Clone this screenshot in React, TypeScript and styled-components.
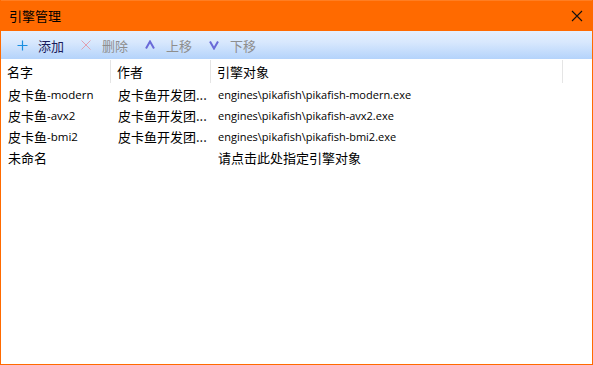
import { createGlobalStyle, styled } from 'styled-components';

const GlobalStyle = createGlobalStyle`
    html, body {
        margin: 0;
        padding: 0;
        background: #ffffff;
    }
    body {
        font-family: 'Noto Sans CJK SC', 'Noto Sans', sans-serif;
    }
`;

const engines = [
    { name: '皮卡鱼', suffix: '-modern', author: '皮卡鱼开发团...', path: 'engines\\pikafish\\pikafish-modern.exe' },
    { name: '皮卡鱼', suffix: '-avx2', author: '皮卡鱼开发团...', path: 'engines\\pikafish\\pikafish-avx2.exe' },
    { name: '皮卡鱼', suffix: '-bmi2', author: '皮卡鱼开发团...', path: 'engines\\pikafish\\pikafish-bmi2.exe' },
];

const App = () => {
    return (
        <>
            <GlobalStyle />
            <Window>
                <TitleBar>
                    <Title>引擎管理</Title>
                    <CloseButton>
                        <svg width="12" height="12" viewBox="0 0 12 12">
                            <path d="M1 1 L11 11 M11 1 L1 11" stroke="#111" strokeWidth="1.1" />
                        </svg>
                    </CloseButton>
                </TitleBar>
                <Toolbar>
                    <ToolButton>
                        <ToolIcon $color="#1a8fe0">
                            <svg width="11" height="11" viewBox="0 0 11 11">
                                <path d="M5.5 0.5 V10.5 M0.5 5.5 H10.5" stroke="currentColor" strokeWidth="1.2" />
                            </svg>
                        </ToolIcon>
                        <ToolLabel $enabled>添加</ToolLabel>
                    </ToolButton>
                    <ToolButton>
                        <ToolIcon $color="#e0a0b0">
                            <svg width="10" height="10" viewBox="0 0 10 10">
                                <path d="M0.5 0.5 L9.5 9.5 M9.5 0.5 L0.5 9.5" stroke="currentColor" strokeWidth="1" />
                            </svg>
                        </ToolIcon>
                        <ToolLabel>删除</ToolLabel>
                    </ToolButton>
                    <ToolButton>
                        <ToolIcon $color="#6a6ad8">
                            <svg width="10" height="10" viewBox="0 0 10 10">
                                <path d="M1 8.5 L5 1.5 L9 8.5" stroke="currentColor" strokeWidth="2" fill="none" />
                            </svg>
                        </ToolIcon>
                        <ToolLabel>上移</ToolLabel>
                    </ToolButton>
                    <ToolButton>
                        <ToolIcon $color="#6a6ad8">
                            <svg width="10" height="10" viewBox="0 0 10 10">
                                <path d="M1 1.5 L5 8.5 L9 1.5" stroke="currentColor" strokeWidth="2" fill="none" />
                            </svg>
                        </ToolIcon>
                        <ToolLabel>下移</ToolLabel>
                    </ToolButton>
                </Toolbar>
                <Table>
                    <HeaderRow>
                        <HeaderCell $width={110}>名字</HeaderCell>
                        <HeaderCell $width={100}>作者</HeaderCell>
                        <HeaderCell $width={352}>引擎对象</HeaderCell>
                    </HeaderRow>
                    {engines.map((e) => (
                        <Row key={e.suffix}>
                            <Cell $width={110}>
                                {e.name}
                                <Latin>{e.suffix}</Latin>
                            </Cell>
                            <Cell $width={100}>{e.author}</Cell>
                            <Cell $width={352}>
                                <Path>{e.path}</Path>
                            </Cell>
                        </Row>
                    ))}
                    <Row>
                        <Cell $width={110}>未命名</Cell>
                        <Cell $width={100} />
                        <Cell $width={352}>请点击此处指定引擎对象</Cell>
                    </Row>
                </Table>
            </Window>
        </>
    );
};

const Window = styled.div`
    width: 593px;
    height: 365px;
    box-sizing: border-box;
    border: 1px solid #ff6a00;
    border-top: none;
    display: flex;
    flex-direction: column;
    background: #ffffff;
    overflow: hidden;
`;

const TitleBar = styled.div`
    height: 31px;
    background: #ff6a00;
    border-top: 1px solid #ff7e22;
    box-sizing: border-box;
    margin: 0 -1px;
    display: flex;
    align-items: center;
    justify-content: space-between;
    padding: 0 10px 0 9px;
`;

const Title = styled.div`
    font-size: 13px;
    color: #000000;
    line-height: 1;
    margin-top: -2px;
`;

const CloseButton = styled.div`
    display: flex;
    align-items: center;
    justify-content: center;
    width: 12px;
    height: 12px;
`;

const Toolbar = styled.div`
    height: 28px;
    background: linear-gradient(to bottom, #e4effe 0%, #d8e8fd 40%, #b4d3fb 100%);
    display: flex;
    align-items: center;
    padding-left: 14px;
    gap: 15px;
`;

const ToolButton = styled.div`
    display: flex;
    align-items: center;
    gap: 9px;
`;

const ToolIcon = styled.span<{ $color: string }>`
    color: ${(p) => p.$color};
    width: 14px;
    display: flex;
    align-items: center;
    justify-content: center;
`;

const ToolLabel = styled.span<{ $enabled?: boolean }>`
    font-size: 13px;
    color: ${(p) => (p.$enabled ? '#1c1c5c' : '#8e8e8e')};
    line-height: 1;
`;

const Table = styled.div`
    display: flex;
    flex-direction: column;
`;

const HeaderRow = styled.div`
    display: flex;
    height: 25px;
`;

const HeaderCell = styled.div<{ $width: number }>`
    width: ${(p) => p.$width}px;
    box-sizing: border-box;
    border-right: 1px solid #e5e5e5;
    margin: 1px 0 1px;
    padding-left: 6px;
    font-size: 13px;
    color: #000000;
    display: flex;
    align-items: center;
`;

const Row = styled.div`
    display: flex;
    height: 21px;
`;

const Cell = styled.div<{ $width: number }>`
    width: ${(p) => p.$width}px;
    box-sizing: border-box;
    padding-left: 7px;
    font-size: 13px;
    color: #000000;
    display: flex;
    align-items: center;
    white-space: nowrap;
    overflow: hidden;
`;

const Latin = styled.span`
    font-family: 'Open Sans', 'Noto Sans', sans-serif;
    font-size: 11.5px;
`;

const Path = styled.span`
    font-family: 'Open Sans', 'Noto Sans', sans-serif;
    font-size: 11px;
`;

export default App;
